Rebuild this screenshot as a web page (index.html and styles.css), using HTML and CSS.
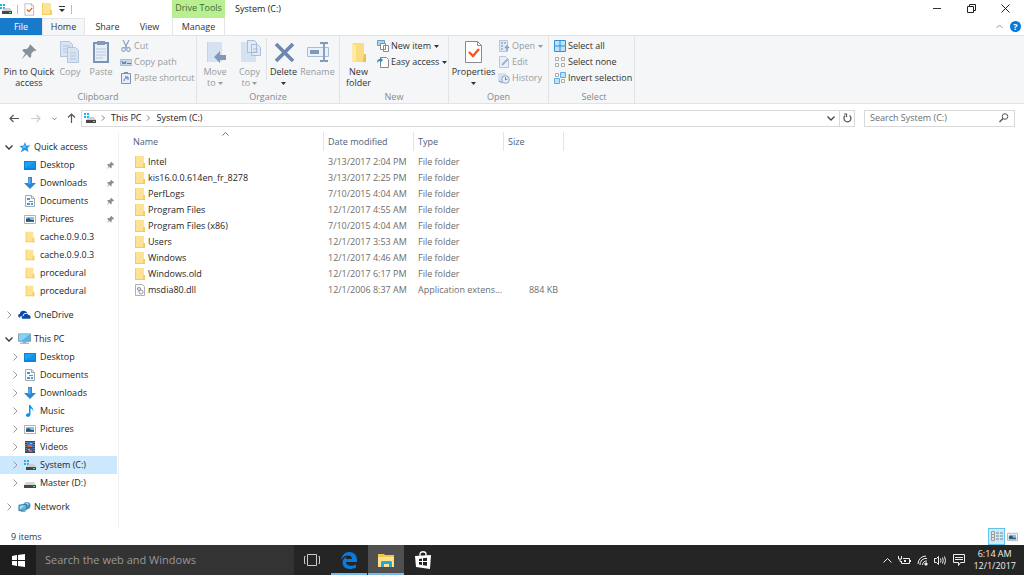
FILE: index.html
```html
<!DOCTYPE html>
<html lang="en">
<head>
<meta charset="utf-8">
<title>System (C:)</title>
<link rel="stylesheet" href="styles.css">
</head>
<body>
<svg class="sprite" aria-hidden="true">
  <symbol id="folder" viewBox="0 0 12 14"><path d="M1 1h9v7h1v5H1z" fill="#ffe394"/><path d="M1 1h1v12H1zM9 8h2v5H9z" fill="#f5cd62"/><path d="M1 12h10v1H1z" fill="#f3cb62"/></symbol>
  <symbol id="drive" viewBox="0 0 12 12"><path d="M2 5h8l2 3H0z" fill="#d5d5d5"/><path d="M0 8h12v3H0z" fill="#484848"/><path d="M9 9h2v1H9z" fill="#4be06a"/></symbol>
  <symbol id="windrive" viewBox="0 0 12 12"><path d="M0 1h2v2H0zM3 1h2v2H3zM0 4h2v2H0zM3 4h2v2H3z" fill="#17b5ee"/><path d="M5 5h5l2 3H2z" fill="#cfcfcf"/><path d="M2 8h10v3H2z" fill="#484848"/><path d="M9 9h2v1H9z" fill="#4be06a"/></symbol>
  <symbol id="desktop" viewBox="0 0 12 12"><path d="M0 2h12v9H0z" fill="#0b83dc"/><path d="M1 3h10v6H1z" fill="#1ea2f7"/><path d="M1 9h10l0-6z" fill="#0f93ec"/></symbol>
  <symbol id="down" viewBox="0 0 12 12"><path d="M4 0h4v6h4l-6 6-6-6h4z" fill="#2f86d6"/><path d="M4.500 1h2v6h-2z" fill="#62abe8"/></symbol>
  <symbol id="doc" viewBox="0 0 12 12"><path d="M1.500.5h6l3 3v8h-9z" fill="#f8fbfd" stroke="#a3abb0"/><path d="M3 3h3v2H3zM5 6h4v1H5zM3 8h3v2H3zM7 8h2v2H7z" fill="#3f9fd5"/><path d="M7.500.5v3h3" fill="none" stroke="#a3abb0"/></symbol>
  <symbol id="picture" viewBox="0 0 12 12"><path d="M.5 2.500h11v8H.5z" fill="#fff" stroke="#aeb2b5"/><path d="M2 4h8v3H2z" fill="#81bff0"/><path d="M2 6l3-1 2 2h3v2H2z" fill="#285775"/><path d="M2 8h8v1H2z" fill="#2f75a4"/></symbol>
  <symbol id="music" viewBox="0 0 12 12"><path d="M5 0h1.500c0 2 4 3 2.500 6.500 0-2-1-3-2.500-3V9c0 4-5 3.500-4.500 1 .3-1.500 2-2 3-1.500z" fill="#0b93f2"/></symbol>
  <symbol id="video" viewBox="0 0 12 12"><path d="M1 0h10v12H1z" fill="#484848"/><path d="M2 1v10M10 1v10" stroke="#aaa" stroke-dasharray="1 1"/><path d="M3 1h6v5H3z" fill="#3d75c6"/><path d="M3 7h6v4H3z" fill="#355c9e"/><path d="M4 4h4v2H4zM5 9h3v2H5z" fill="#d36a36"/><path d="M6 2h2v1H6zM4 8h2v1H4z" fill="#e0c33f"/></symbol>
  <symbol id="star" viewBox="0 0 12 12"><path d="M6.500 1l1.200 3.500H12L9 7l1 4-3.500-2L2 11.500 4 7.500 1 5l4-.5z" fill="#2b95dd"/><path d="M5 4h2v3H4z" fill="#5fc0f5"/></symbol>
  <symbol id="cloud" viewBox="0 0 14 12"><path d="M2 9C-1 8 0 5 2 5c0-4 6-5 8-1-4-1-5 2-5 3-2 0-3 1-3 2z" fill="#0a4aa8"/><path d="M5 10c-2-1-1-3 1-3 0-3 5-3 5-1 3 0 3 3 2 4z" fill="#0a4aa8"/></symbol>
  <symbol id="pc" viewBox="0 0 14 12"><path d="M.5.5h13v8H.5z" fill="#50b4f0" stroke="#8a9ba8"/><path d="M1 1h12L4 8H1z" fill="#86d0fa"/><path d="M5 9h4v1H5zM2 10h10v1H2z" fill="#9aa9b3"/></symbol>
  <symbol id="network" viewBox="0 0 14 12"><circle cx="9.500" cy="4.500" r="4" fill="#4a90c4"/><path d="M7 2l3-1 2 2-2 1z" fill="#9bd2ee"/><path d="M1 4l8-1v6l-8 1z" fill="#55bce9" stroke="#32799f"/><path d="M2 5l5-1-4 4H2z" fill="#9ce0fa"/><path d="M3 10h5v1H3z" fill="#55727f"/></symbol>
  <symbol id="gearfile" viewBox="0 0 12 14"><path d="M1.500 1.500h7l2 2v9h-9z" fill="#fafafa" stroke="#b0b0b0"/><circle cx="5" cy="6" r="1.500" fill="none" stroke="#7e8b96"/><circle cx="7" cy="9" r="2" fill="none" stroke="#94a0aa"/></symbol>
  <symbol id="pin" viewBox="0 0 24 24"><path d="M14 2l8 8-2 1-1-1-4 4v4l-2 2-4-5-7 7 5-8-4-4 2-2h4l4-4-1-1z" fill="#87919a"/></symbol>
  <symbol id="right" viewBox="0 0 8 8"><path d="M2.500.5L6 4 2.500 7.500" fill="none" stroke="currentColor"/></symbol>
  <symbol id="open" viewBox="0 0 8 8"><path d="M.5 2.500L4 6l3.500-3.500" fill="none" stroke="currentColor" stroke-width="1.300"/></symbol>
  <symbol id="caret" viewBox="0 0 5 3"><path d="M0 0h5L2.500 3z" fill="currentColor"/></symbol>
  <symbol id="check" viewBox="0 0 20 24"><path d="M1.500 1.500h12l4 4v17h-16z" fill="#fff" stroke="#8b8b8b"/><path d="M13.500 1.500v4h4" fill="none" stroke="#8b8b8b"/><path d="M5 12l4 4 6-7" fill="none" stroke="#ee5a24" stroke-width="2.400"/></symbol>
</svg>

<div class="window">
  <header class="top">
    <div class="quick">
      <svg class="i12"><use href="#windrive"/></svg><i class="bar"></i>
      <button aria-label="Properties"><svg width="11" height="13"><use href="#check"/></svg></button>
      <button aria-label="New folder"><svg width="12" height="14"><use href="#folder"/></svg></button>
      <button aria-label="Customize"><svg width="6" height="6" viewBox="0 0 6 6"><path d="M0 0h6v1H0zM0 3h6L3 6z" fill="#333"/></svg></button><i class="bar"></i>
    </div>
    <nav class="tabs">
      <button class="tab file">File</button><button class="tab home">Home</button><button class="tab share">Share</button><button class="tab view">View</button>
    </nav>
    <div class="tools"><span>Drive Tools</span><button class="tab">Manage</button></div>
    <h1>System (C:)</h1>
    <div class="wincontrols">
      <button aria-label="Minimize"><svg width="9" height="9"><path d="M0 4.500h8" stroke="#333"/></svg></button>
      <button aria-label="Restore"><svg width="9" height="9" fill="none" stroke="#222"><path d="M.5 2.500h6v6h-6zM2.500 2V.5h6v6H7"/></svg></button>
      <button aria-label="Close"><svg width="9" height="9"><path d="M.5.5l8 8M8.500.5l-8 8" stroke="#222"/></svg></button>
    </div>
    <div class="helpers">
      <button aria-label="Collapse ribbon"><svg width="7" height="5" fill="none" stroke="#999"><path d="M.5 4l3-3 3 3"/></svg></button>
      <button class="help" aria-label="Help">?</button>
    </div>
  </header>

  <section class="ribbon">
    <div class="group clipboard">
      <div class="tools-row">
        <button class="big on wpin"><svg viewBox="-4 -4 32 32"><use href="#pin" width="24" height="24"/></svg>Pin to Quick<br>access</button>
        <button class="big wcopy"><svg viewBox="0 0 24 24" fill="#d9e4f3" stroke="#b3c5df"><path d="M2.500 1.500h9l3 3v12h-12z"/><path d="M5 6h7M5 9h7M5 12h5"/><path d="M9.500 7.500h8l3 3v12h-11z"/><path d="M12 13h6M12 16h6M12 19h6"/></svg>Copy</button>
        <button class="big wpaste"><svg viewBox="0 0 24 24"><path d="M5 3h14v19H5z" fill="#e6eef8" stroke="#7b93b8" stroke-width="2"/><path d="M8 1h8v4H8z" fill="#8299bb"/><path d="M7 9h10M7 12h10M7 15h10M7 18h7" stroke="#b9c9df"/></svg>Paste</button>
        <div class="stack">
          <button><svg viewBox="0 0 12 12" fill="none" stroke="#8ba2c4" stroke-width="1.200"><path d="M3 0l4 8M9 0L5 8"/><circle cx="3.500" cy="9.500" r="1.800"/><circle cx="8.500" cy="9.500" r="1.800"/></svg>Cut</button>
          <button><svg viewBox="0 0 12 12"><path d="M.5 3.500h11v6H.5z" fill="#c7d7ec" stroke="#a9bddb"/><path d="M2 5l1 3 1-2 1 2 1-3M7 7.500h4" fill="none" stroke="#5e7ba5"/></svg>Copy path</button>
          <button><svg viewBox="0 0 12 12"><path d="M1.500 1.500h9v10h-9z" fill="#e6eef8" stroke="#7b93b8"/><path d="M4 0h4v2H4z" fill="#7b93b8"/><path d="M4 9c0-2 1-3 3-3M5 5h3v3" fill="none" stroke="#4f75ad"/></svg>Paste shortcut</button>
        </div>
      </div>
      <div class="caption">Clipboard</div>
    </div>
    <div class="group organize">
      <div class="tools-row">
        <button class="big wmove"><svg viewBox="0 0 24 24"><path d="M4 2h15v20H4z" fill="#d6e2f2"/><path d="M4 2h1v20H4z" fill="#c3d3e8"/><path d="M11 17l6-6v4h6v5h-6v3z" fill="#8198bb"/></svg>Move<br>to <svg class="caret"><use href="#caret"/></svg></button>
        <button class="big wcopyto"><svg viewBox="0 0 24 24"><path d="M3 2h15v20H3z" fill="#d6e2f2"/><path d="M9.500.5h7l2 2v10h-9zM13.500 4.500h6l3 3v8h-9z" fill="#e1eaf6" stroke="#a9bdd9"/><path d="M15 9h5M15 12h5" stroke="#a9bdd9"/></svg>Copy<br>to <svg class="caret"><use href="#caret"/></svg></button>
        <i class="split"></i>
        <button class="big on wdelete"><svg viewBox="0 0 24 24"><path d="M4 4l17 17M21 4L4 21" stroke="#6f87ae" stroke-width="3.600"/></svg>Delete<br><svg class="caret"><use href="#caret"/></svg></button>
        <button class="big wrename"><svg viewBox="0 0 24 24"><path d="M1.500 7.500h21v9h-21z" fill="#eaf1f9" stroke="#a9bdd9"/><path d="M4 10h9v4H4z" fill="#8198bb"/><path d="M14 3h3l1 1 1-1h3M18 4v16M14 21h3l1-1 1 1h3" fill="none" stroke="#8198bb" stroke-width="1.800"/></svg>Rename</button>
      </div>
      <div class="caption">Organize</div>
    </div>
    <div class="group new">
      <div class="tools-row">
        <button class="big on wnew"><svg viewBox="0 0 24 24"><path d="M5 3h12v11h2v8H5z" fill="#fbdc83"/><path d="M5 3l4 3v17l-4-2z" fill="#ffeaa9"/><path d="M17 14h2v8h-3z" fill="#edbd4d"/></svg>New<br>folder</button>
        <div class="stack on">
          <button><svg viewBox="0 0 12 12" fill="#fff" stroke="#8b8b8b"><path d="M.5.5h7v5h-7z" fill="#a9d5ee" stroke="#6a9db8"/><path d="M3.500 3.500h5v6h-5zM6.500 5.500h5v6h-5z"/></svg>New item <svg class="caret"><use href="#caret"/></svg></button>
          <button><svg viewBox="0 0 12 12"><path d="M3.500 1.500h6l2 2v8h-8z" fill="#fff" stroke="#8b8b8b"/><path d="M0 7c0-3 1-4 3-4V1l3 3-3 3V5C1 5 1 6 0 7z" fill="#3387c2"/></svg>Easy access <svg class="caret"><use href="#caret"/></svg></button>
        </div>
      </div>
      <div class="caption">New</div>
    </div>
    <div class="group opengroup">
      <div class="tools-row">
        <button class="big on wprop"><svg viewBox="0 0 20 24"><use href="#check"/></svg>Properties<br><svg class="caret"><use href="#caret"/></svg></button>
        <div class="stack">
          <button><svg viewBox="0 0 12 12"><path d="M1.500.5h8v11h-8z" fill="#dfe8f4" stroke="#b3c5df"/><path d="M3 3h2M3 6h2M3 9h2M6 3h2" stroke="#6f8db8"/><path d="M9 11V6M7 8l2-2 2 2" fill="none" stroke="#8ba2c4" stroke-width="1.500"/></svg>Open <svg class="caret"><use href="#caret"/></svg></button>
          <button><svg viewBox="0 0 12 12"><path d="M1.500.5h6l3 3v8h-9z" fill="#e8eff8" stroke="#b3c5df"/><path d="M4 9l6-6" stroke="#9db2d1" stroke-width="2"/></svg>Edit</button>
          <button><svg viewBox="0 0 12 12"><path d="M0 1h8v9H0z" fill="#d6e2f2"/><circle cx="7.500" cy="7.500" r="3.800" fill="#e8eff8" stroke="#8ba2c4"/><path d="M7.500 5v3l2-1M1 9l3 2" fill="none" stroke="#6f8db8"/></svg>History</button>
        </div>
      </div>
      <div class="caption">Open</div>
    </div>
    <div class="group select">
      <div class="tools-row">
        <div class="stack on">
          <button><svg viewBox="0 0 12 12"><path d="M.5.500h11v11H.5zM6 0v12M0 6h12" fill="#bfe2fa" stroke="#2d90d8"/></svg>Select all</button>
          <button><svg viewBox="0 0 12 12"><path d="M1.500 1.500h3v3h-3zM7.500 1.500h3v3h-3zM1.500 7.500h3v3h-3zM7.500 7.500h3v3h-3z" fill="#fff" stroke="#aaa"/></svg>Select none</button>
          <button><svg viewBox="0 0 12 12"><path d="M1.500 1.500h3v3h-3zM7.500 7.500h3v3h-3z" fill="#fff" stroke="#aaa"/><path d="M6.500.5h5v5h-5zM.5 6.500h5v5h-5z" fill="#bfe2fa" stroke="#58aee8"/></svg>Invert selection</button>
        </div>
      </div>
      <div class="caption">Select</div>
    </div>
  </section>

  <div class="address">
    <button aria-label="Back"><svg width="10" height="9" fill="none" stroke="#555" stroke-width="1.200"><path d="M10 4.500H1M4.500 1L1 4.500 4.500 8"/></svg></button>
    <button aria-label="Forward"><svg width="10" height="9" fill="none" stroke="#ccc" stroke-width="1.200"><path d="M0 4.500h9M5.500 1L9 4.500 5.500 8"/></svg></button>
    <button class="recent" aria-label="Recent locations"><svg width="5" height="5"><use href="#open"/></svg></button>
    <button class="up" aria-label="Up"><svg width="9" height="10" fill="none" stroke="#555" stroke-width="1.200"><path d="M4.500 10V1M1 4.500L4.500 1 8 4.500"/></svg></button>
    <div class="path">
      <svg class="i12"><use href="#windrive"/></svg>
      <svg class="sep"><use href="#right"/></svg><button>This PC</button>
      <svg class="sep"><use href="#right"/></svg><button>System (C:)</button>
      <button class="pathdrop" aria-label="Previous locations"><svg width="8" height="8"><use href="#open"/></svg></button>
      <button class="refresh" aria-label="Refresh"><svg width="9" height="10" fill="none" stroke="#555" stroke-width="1.200"><path d="M6.500 2.500A3.500 3.500 0 1 1 2 2.800M1 1h2.500v3"/></svg></button>
    </div>
    <form class="search">
      <input type="text" placeholder="Search System (C:)" aria-label="Search System (C:)">
      <svg width="10" height="10" fill="none" stroke="#555"><circle cx="6" cy="3.500" r="2.800"/><path d="M4 5.500L.5 9" stroke-width="1.500"/></svg>
    </form>
  </div>

  <div class="body">
    <nav class="tree">
      <a class="root" href="#"><svg class="arrow dark"><use href="#open"/></svg><svg class="ico"><use href="#star"/></svg>Quick access</a>
      <a href="#"><svg class="ico"><use href="#desktop"/></svg>Desktop<svg class="pin"><use href="#pin"/></svg></a>
      <a href="#"><svg class="ico"><use href="#down"/></svg>Downloads<svg class="pin"><use href="#pin"/></svg></a>
      <a href="#"><svg class="ico"><use href="#doc"/></svg>Documents<svg class="pin"><use href="#pin"/></svg></a>
      <a href="#"><svg class="ico"><use href="#picture"/></svg>Pictures<svg class="pin"><use href="#pin"/></svg></a>
      <a href="#"><svg class="ico"><use href="#folder"/></svg>cache.0.9.0.3</a>
      <a href="#"><svg class="ico"><use href="#folder"/></svg>cache.0.9.0.3</a>
      <a href="#"><svg class="ico"><use href="#folder"/></svg>procedural</a>
      <a href="#"><svg class="ico"><use href="#folder"/></svg>procedural</a>
      <a class="root" href="#"><svg class="arrow"><use href="#right"/></svg><svg class="ico"><use href="#cloud"/></svg>OneDrive</a>
      <a class="root" href="#"><svg class="arrow dark"><use href="#open"/></svg><svg class="ico"><use href="#pc"/></svg>This PC</a>
      <a class="sub" href="#"><svg class="arrow"><use href="#right"/></svg><svg class="ico"><use href="#desktop"/></svg>Desktop</a>
      <a class="sub" href="#"><svg class="arrow"><use href="#right"/></svg><svg class="ico"><use href="#doc"/></svg>Documents</a>
      <a class="sub" href="#"><svg class="arrow"><use href="#right"/></svg><svg class="ico"><use href="#down"/></svg>Downloads</a>
      <a class="sub" href="#"><svg class="arrow"><use href="#right"/></svg><svg class="ico"><use href="#music"/></svg>Music</a>
      <a class="sub" href="#"><svg class="arrow"><use href="#right"/></svg><svg class="ico"><use href="#picture"/></svg>Pictures</a>
      <a class="sub" href="#"><svg class="arrow"><use href="#right"/></svg><svg class="ico"><use href="#video"/></svg>Videos</a>
      <a class="sub current" href="#"><svg class="arrow"><use href="#right"/></svg><svg class="ico"><use href="#windrive"/></svg>System (C:)</a>
      <a class="sub" href="#"><svg class="arrow"><use href="#right"/></svg><svg class="ico"><use href="#drive"/></svg>Master (D:)</a>
      <a class="root" href="#"><svg class="arrow"><use href="#right"/></svg><svg class="ico"><use href="#network"/></svg>Network</a>
    </nav>
    <main>
      <table>
        <thead><tr><th class="cname"><span>Name</span><svg class="sort" width="7" height="4" fill="none" stroke="#777"><path d="M.5 3.500l3-3 3 3"/></svg></th><th class="cdate"><span>Date modified</span></th><th class="ctype"><span>Type</span></th><th class="csize"><span>Size</span></th></tr></thead>
        <tbody>
          <tr><td><svg><use href="#folder"/></svg>Intel</td><td>3/13/2017 2:04 PM</td><td>File folder</td><td></td></tr>
          <tr><td><svg><use href="#folder"/></svg>kis16.0.0.614en_fr_8278</td><td>3/13/2017 2:25 PM</td><td>File folder</td><td></td></tr>
          <tr><td><svg><use href="#folder"/></svg>PerfLogs</td><td>7/10/2015 4:04 AM</td><td>File folder</td><td></td></tr>
          <tr><td><svg><use href="#folder"/></svg>Program Files</td><td>12/1/2017 4:55 AM</td><td>File folder</td><td></td></tr>
          <tr><td><svg><use href="#folder"/></svg>Program Files (x86)</td><td>7/10/2015 4:04 AM</td><td>File folder</td><td></td></tr>
          <tr><td><svg><use href="#folder"/></svg>Users</td><td>12/1/2017 3:53 AM</td><td>File folder</td><td></td></tr>
          <tr><td><svg><use href="#folder"/></svg>Windows</td><td>12/1/2017 4:46 AM</td><td>File folder</td><td></td></tr>
          <tr><td><svg><use href="#folder"/></svg>Windows.old</td><td>12/1/2017 6:17 PM</td><td>File folder</td><td></td></tr>
          <tr><td><svg><use href="#gearfile"/></svg>msdia80.dll</td><td>12/1/2006 8:37 AM</td><td>Application extens...</td><td>884 KB</td></tr>
        </tbody>
      </table>
    </main>
  </div>

  <footer class="status">
    <span>9 items</span>
    <button class="details" aria-label="Details view"><svg width="12" height="11" fill="none"><path d="M.5.5h3v3h-3zM.5 3.500h3v3h-3zM.5 6.500h3v3h-3z" stroke="#a99a8f"/><path d="M5 2h3M9 2h3M5 5h3M9 5h3M5 8h3M9 8h3" stroke="#6f8590"/></svg></button>
    <button aria-label="Large icons view"><svg width="11" height="11"><use href="#picture"/></svg></button>
  </footer>
</div>

<div class="taskbar">
  <button class="start" aria-label="Start"><svg width="13" height="13" fill="#fff"><path d="M0 2l5-1v5H0zM6 1l7-1v6H6zM0 7h5v5l-5-1zM6 7h7v6l-7-1z"/></svg></button>
  <input class="websearch" type="text" placeholder="Search the web and Windows" aria-label="Search the web and Windows">
  <button class="app" aria-label="Task view"><svg width="16" height="12" fill="none" stroke="#ccc"><path d="M3.500.5h9v11h-9zM1.500 2.500h-1v7h1M14.500 2.500h1v7h-1"/></svg></button>
  <button class="app running" aria-label="Edge"><svg width="16" height="17" viewBox="0 0 16 17"><path d="M0 8C1 3 4 0 8 0c5 0 8 3 8 8v2H5c0 4 6 5 10 2.500v3C8 19 1.500 16 1.500 10.500c0-2.500 1.500-4.500 4-5.500C5 6 5 6.500 5 7h6c0-5-8-4.500-11 1z" fill="#0a7bdc"/></svg></button>
  <button class="app active" aria-label="File Explorer"><svg width="17" height="15" viewBox="0 0 17 15"><path d="M0 1h6l1 1h9v12H0z" fill="#f5c64f"/><path d="M0 4h16v10H0z" fill="#ffe38a"/><path d="M3 14V9l1-1h9l1 1v5h-3v-3H6v3z" fill="#22a6e8"/></svg></button>
  <button class="app" aria-label="Store"><svg width="17" height="18" viewBox="0 0 17 18"><path d="M5 5V3c0-3 6-3 6 0v2" fill="none" stroke="#fff" stroke-width="1.300"/><path d="M0 5l16-1-1 14-14-2z" fill="#fff"/><path d="M4 8l3-.5V10H4zM8 7.300l4-.5V10H8zM4 11h3v3l-3-.5zM8 11h4v3.800l-4-.6z" fill="#222"/></svg></button>
  <div class="tray">
    <button aria-label="Show hidden icons"><svg width="9" height="6" fill="none" stroke="#eee"><path d="M.5 5.500l4-4 4 4"/></svg></button>
    <button aria-label="Battery"><svg width="13" height="9" fill="none" stroke="#eee"><path d="M5 2.500h6.500v5h-8V6M12.500 4v2M.5 0v3h3V0M2 3v2.500h2"/><path d="M6 4h2v2H6z" fill="#eee" stroke="none"/></svg></button>
    <button aria-label="Wi-Fi"><svg width="11" height="11" fill="none" stroke="#eee"><path d="M1 9a8 8 0 0 1 8-8M3 10a6 6 0 0 1 7-6.500M5.500 10a4 4 0 0 1 4.500-4"/><path d="M8 8h2v2H8z" fill="#eee"/></svg></button>
    <button aria-label="Volume"><svg width="13" height="11" fill="none" stroke="#eee"><path d="M.5 3.500h2l2-2v8l-2-2h-2zM6.500 3.500q1 2 0 4M8.500 2.500q1.500 3 0 6M10.500 1.500q2 4 0 8"/></svg></button>
    <button aria-label="Notifications"><svg width="12" height="12" fill="none" stroke="#eee"><path d="M.5.5h11v8h-4l-2 3v-3h-5zM2 3.500h8M2 5.500h8"/></svg></button>
    <time>6:14 AM<br>12/1/2017</time>
  </div>
</div>
</body>
</html>
```

FILE: styles.css
```css
* { box-sizing: border-box; }

body {
  margin: 0;
  min-height: 100vh;
  display: flex;
  flex-direction: column;
  background: #fff;
  color: #1e1e1e;
  font: 9px/12px "Segoe UI", "Open Sans", "Noto Sans", sans-serif;
}

.sprite { position: absolute; width: 0; height: 0; }
svg { display: block; flex: none; }
button, input { font: inherit; color: inherit; border: 0; padding: 0; margin: 0; background: none; }
button { display: flex; align-items: center; justify-content: center; white-space: nowrap; }
a { color: inherit; text-decoration: none; }
.i12 { width: 12px; height: 12px; }

.window { flex: 1; display: flex; flex-direction: column; }

/* Title bar and tabs */
.top {
  display: grid;
  grid-template-columns: 172px 53px 1fr auto;
  grid-template-rows: 18px 17px;
}
.quick { display: flex; align-items: center; gap: 6px; }
.quick > :nth-child(2) { margin-left: -1px; }
.bar { width: 1px; height: 9px; background: #bbb; }
.tabs { grid-row: 2; grid-column: 1; display: flex; }
.tab { height: 17px; color: #333; }
.file { width: 42px; background: #1979ca; color: #fff; }
.home { width: 43px; background: #f5f6f7; border: 1px solid #e3e5e7; border-bottom: 0; }
.share { width: 45px; }
.view { width: 39px; }
.tools { grid-row: 1 / 3; grid-column: 2; display: flex; flex-direction: column; }
.tools span { height: 18px; padding-top: 2px; background: #b9ef91; color: #3f6b35; text-align: center; }
.tools .tab { border: solid #e3e5e7; border-width: 0 1px; }
.top h1 { margin: 0; padding: 3px 10px; font-size: 9px; font-weight: 400; color: #222; }
.wincontrols { grid-row: 1; grid-column: 4; display: flex; padding-right: 2px; }
.wincontrols button { width: 34px; height: 16px; }
.helpers { grid-row: 2; grid-column: 4; display: flex; justify-content: flex-end; align-items: center; gap: 7px; padding-right: 3px; }
.help { width: 11px; height: 11px; border-radius: 50%; background: #0a78d4; color: #fff; font-weight: 700; }

/* Ribbon */
.ribbon {
  display: flex;
  height: 69px;
  background: #f5f6f7;
  border: solid #e1e4e6;
  border-width: 1px 0;
}
.group { display: flex; flex-direction: column; justify-content: space-between; border-right: 1px solid #e1e3e5; padding-top: 2px; }
.clipboard { width: 197px; }
.organize { width: 143px; }
.new { width: 109px; }
.opengroup { width: 100px; }
.select { width: 86px; padding-left: 5px; }
.tools-row { display: flex; align-items: flex-start; color: #969ca1; }
.caption { height: 12px; text-align: center; color: #85898d; }
.big { display: block; padding-top: 2px; line-height: 11px; text-align: center; }
.big > svg:first-child { width: 24px; height: 24px; margin: 0 auto 2px; }
.on { color: #333; }
.caret { display: inline-block; width: 5px; height: 3px; vertical-align: middle; }
.stack .caret { margin-left: 1px; }
.wpin { width: 58px; }
.wcopy { width: 24px; }
.wpaste { width: 38px; }
.wmove { width: 36px; }
.wcopyto { width: 33px; }
.split { width: 1px; height: 42px; background: #dfe2e5; }
.wdelete { width: 33px; }
.wrename { width: 35px; }
.wnew { width: 37px; }
.wprop { width: 49px; }
.stack { display: flex; flex-direction: column; align-items: flex-start; }
.stack button { height: 16px; gap: 2px; }
.stack button > svg:first-child { width: 12px; height: 12px; }

/* Address bar */
.address { display: flex; align-items: center; height: 28px; padding: 0 9px; color: #222; }
.address > button { width: 10px; height: 18px; margin-right: 12px; }
.address > .recent { margin: 0 7px 0 -4px; color: #666; }
.address > .up { margin-right: 5px; }
.path { flex: 1; display: flex; align-items: center; height: 17px; padding-left: 2px; border: 1px solid #d9d9d9; }
.sep { width: 6px; height: 6px; margin: 0 5px 0 4px; color: #555; }
.pathdrop { width: 16px; margin-left: auto; color: #444; }
.refresh { width: 15px; height: 15px; border-left: 1px solid #d9d9d9; }
.search { display: flex; align-items: center; width: 151px; height: 17px; margin-left: 9px; padding: 0 5px; border: 1px solid #d9d9d9; }
.search input { flex: 1; min-width: 0; outline: 0; }
.search input::placeholder { color: #6d6d6d; opacity: 1; }

/* Folder tree */
.body { flex: 1; display: flex; }
.tree { width: 119px; padding: 6px 1px 0 0; border-right: 1px solid #f0f0f0; }
.tree a { display: flex; align-items: center; height: 18px; padding-left: 24px; }
.tree .root { padding-left: 5px; }
.tree .root:not(:first-child) { margin-top: 6px; }
.tree .sub { padding-left: 11px; }
.tree .sub .arrow { margin-right: 5px; }
.tree .current { background: #cce8ff; }
.arrow { width: 8px; height: 8px; margin-right: 5px; color: #999; }
.arrow.dark { color: #333; }
.ico { width: 12px; height: 12px; margin-right: 4px; }
.root .ico { width: 13px; margin-right: 3px; }
.tree .pin { width: 9px; height: 9px; margin: 0 2px 0 auto; }

/* File list */
main { flex: 1; min-width: 0; }
table { width: 445px; table-layout: fixed; border-collapse: collapse; }
th { position: relative; height: 22px; padding: 0; vertical-align: top; text-align: left; font-weight: 400; color: #4c607a; }
th span { display: block; height: 19px; padding: 4px 0 0 4px; border-right: 1px solid #e2e4e6; }
.cname { width: 205px; }
.cname span { padding-left: 14px; }
.cdate, .ctype { width: 90px; }
.csize { width: 60px; }
.sort { position: absolute; top: 0; left: 103px; }
td { height: 16px; padding: 0 0 0 4px; color: #6d6d6d; white-space: nowrap; }
td:first-child { display: flex; align-items: center; gap: 2px; padding-left: 15px; color: #1e1e1e; }
td:last-child { padding-right: 6px; text-align: right; }
td svg { width: 12px; height: 14px; }

/* Status bar */
.status { display: flex; align-items: center; height: 18px; padding: 0 4px 0 11px; color: #23406b; }
.status span { flex: 1; padding-top: 1px; }
.status button { width: 15px; height: 17px; }
.status .details { width: 17px; border: 1px solid #66c3ec; background: #cdeaf8; }

/* Taskbar */
.taskbar { display: flex; height: 30px; background: #252525; color: #eee; }
.start { width: 36px; background: #1e1e1e; }
.websearch { width: 258px; padding: 0 9px; background: #333; font-size: 11px; outline: 0; }
.websearch::placeholder { color: #999; opacity: 1; }
.app { width: 36px; margin-right: 1px; border: solid transparent; border-width: 2px 0; }
.running { border-bottom-color: #76b9ed; }
.active { background: #505050; border-bottom-color: #76b9ed; }
.tray { display: flex; align-items: center; margin-left: auto; gap: 6px; padding-right: 8px; }
.tray time { margin-left: 2px; text-align: center; }
```
